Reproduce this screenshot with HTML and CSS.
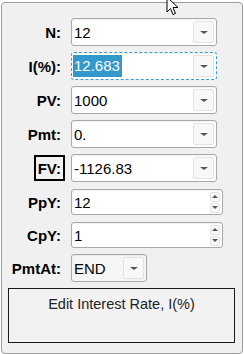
FILE: index.html
```html
<!DOCTYPE html>
<html lang="en">
<head>
  <meta charset="UTF-8">
  <title>TVM Solver</title>
  <link rel="stylesheet" href="styles.css">
</head>
<body>
  <div class="panel">
    <div class="row">
      <span class="lbl">N:</span>
      <div class="combo"><span class="val">12</span><span class="drop"><i class="tri"></i></span></div>
    </div>
    <div class="row">
      <span class="lbl">I(%):</span>
      <div class="combo focus"><span class="val"><span class="sel">12.683</span></span><span class="drop"><i class="tri"></i></span></div>
    </div>
    <div class="row">
      <span class="lbl">PV:</span>
      <div class="combo"><span class="val">1000</span><span class="drop"><i class="tri"></i></span></div>
    </div>
    <div class="row">
      <span class="lbl">Pmt:</span>
      <div class="combo"><span class="val">0.</span><span class="drop"><i class="tri"></i></span></div>
    </div>
    <div class="row">
      <span class="lbl"><span class="boxed">FV:</span></span>
      <div class="combo"><span class="val">-1126.83</span><span class="drop"><i class="tri"></i></span></div>
    </div>
    <div class="row spin-row">
      <span class="lbl">PpY:</span>
      <div class="spin"><span class="val">12</span><span class="arrows"><span class="arr"><i class="tri up"></i></span><span class="arr"><i class="tri"></i></span></span></div>
    </div>
    <div class="row spin-row">
      <span class="lbl">CpY:</span>
      <div class="spin"><span class="val">1</span><span class="arrows"><span class="arr"><i class="tri up"></i></span><span class="arr"><i class="tri"></i></span></span></div>
    </div>
    <div class="row">
      <span class="lbl">PmtAt:</span>
      <div class="combo short"><span class="val">END</span><span class="drop"><i class="tri"></i></span></div>
    </div>
    <div class="message">Edit Interest Rate, I(%)</div>
  </div>

  <svg class="cursor" width="14" height="20" viewBox="0 0 14 20">
    <path d="M1 1 L1 16 L4.5 12.5 L7 18.5 L9.5 17.5 L7 11.5 L12 11.5 Z" fill="#fff" stroke="#000" stroke-width="1" stroke-linejoin="miter"/>
  </svg>
</body>
</html>
```

FILE: styles.css
```css
body {
  margin: 0;
  background-color: #fff;
  font-family: "Liberation Sans", Arial, sans-serif;
  color: #000;
}

.panel {
  margin: 2px 0 0 1px;
  width: 242px;
  height: 352px;
  box-sizing: border-box;
  border: 1px solid #9c9c9c;
  border-radius: 4px;
  background-color: #f0f0f0;
  padding: 15px 7px 0 6px;
  display: flex;
  flex-direction: column;
  gap: 6px;
}

.row {
  display: flex;
  align-items: center;
  height: 28px;
}

.spin-row {
  height: 26px;
  margin-top: 1px;
}

.lbl {
  width: 53px;
  margin-right: 10px;
  text-align: right;
  font-weight: bold;
  font-size: 15px;
}

.boxed {
  display: inline-block;
  border: 2px solid #000;
  padding: 3px 2px 2px 2px;
  margin-right: -4px;
  line-height: 17px;
}

.combo, .spin {
  width: 146px;
  height: 28px;
  box-sizing: border-box;
  border: 1px solid #a8a8a8;
  border-radius: 3px;
  background-color: #fff;
  display: flex;
  align-items: center;
  padding: 0 2px 0 2px;
  box-shadow: inset 0 1px 1px rgba(0, 0, 0, 0.06);
}

.spin {
  width: 152px;
  height: 26px;
}

.combo.short {
  width: 76px;
  background-color: #f5f5f5;
}

.combo.focus {
  border: 1px dashed #3a9bcb;
}

.val {
  flex: 1;
  font-size: 15px;
}

.sel {
  display: inline-block;
  height: 22px;
  line-height: 22px;
  padding: 0 2px 0 1px;
  margin-left: -1px;
  background-color: #3399cc;
  color: #fff;
}

.drop {
  width: 21px;
  height: 22px;
  box-sizing: border-box;
  border: 1px solid #e2e2e2;
  border-radius: 2px;
  background-color: #f8f8f8;
  display: flex;
  align-items: center;
  justify-content: center;
}

.tri {
  width: 0;
  height: 0;
  border-left: 4px solid transparent;
  border-right: 4px solid transparent;
  border-top: 3px solid #555;
}

.tri.up {
  border-top: none;
  border-bottom: 3px solid #555;
}

.arrows {
  display: flex;
  flex-direction: column;
  gap: 1px;
}

.arr {
  width: 10px;
  height: 10px;
  box-sizing: border-box;
  border: 1px solid #e2e2e2;
  border-radius: 2px;
  background-color: #f8f8f8;
  display: flex;
  align-items: center;
  justify-content: center;
}

.arr .tri {
  border-left-width: 3px;
  border-right-width: 3px;
}

.message {
  height: 55px;
  box-sizing: border-box;
  border: 1px solid #1a1a1a;
  background-color: #f2f2f2;
  text-align: center;
  font-size: 14.5px;
  color: #222;
  padding-top: 7px;
}

.cursor {
  position: absolute;
  left: 166px;
  top: -4px;
}
```
